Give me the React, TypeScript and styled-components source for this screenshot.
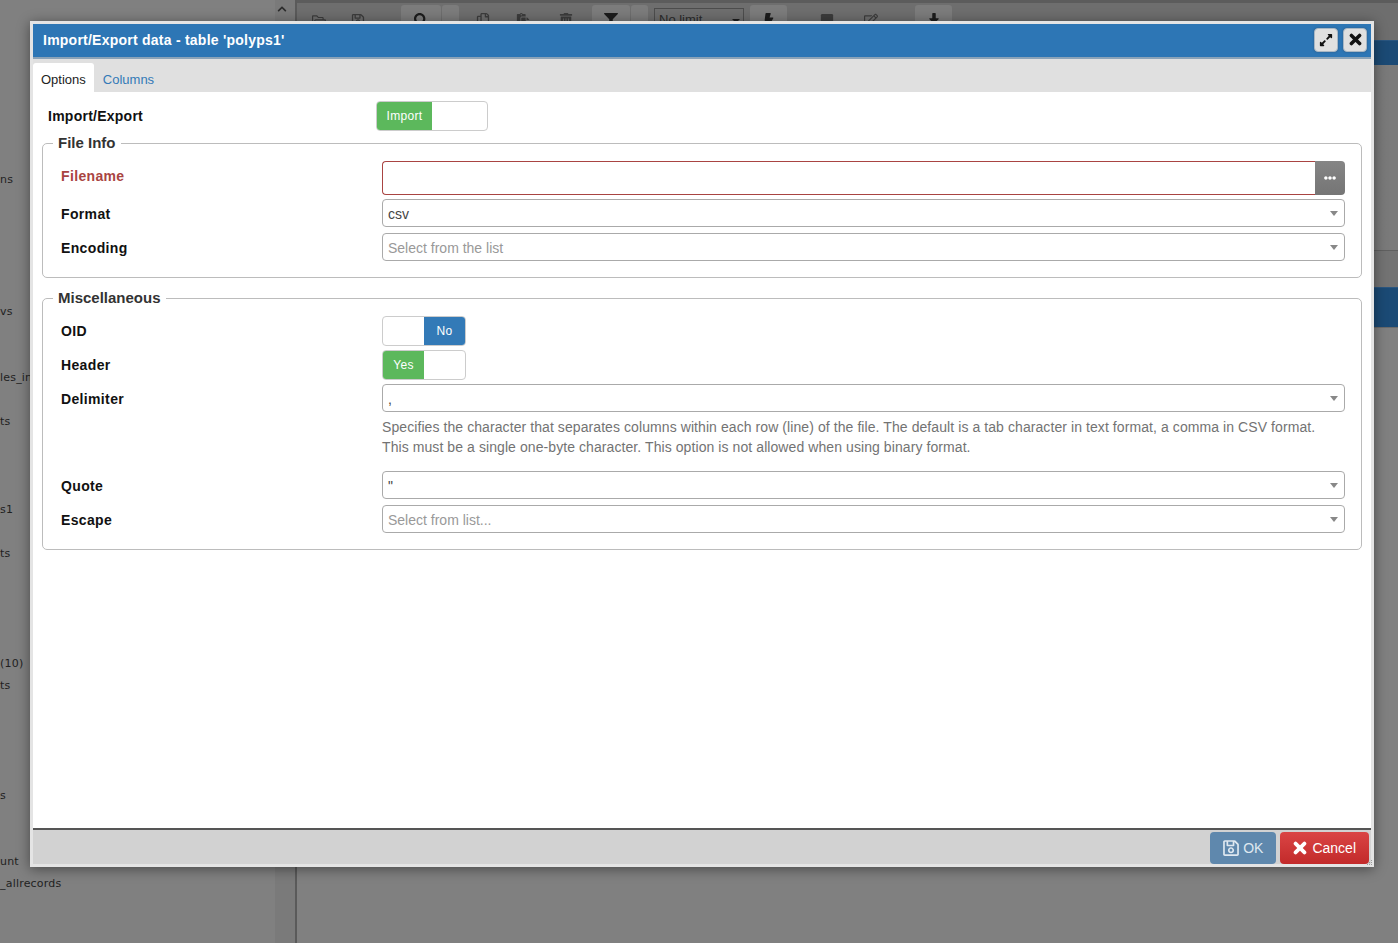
import React from "react";
import styled, { createGlobalStyle } from "styled-components";
import {
  FaRegFolderOpen, FaRegSave, FaSearch, FaRegCopy, FaPaste, FaTrashAlt, FaFilter,
  FaBolt, FaStop, FaRegEdit, FaDownload, FaExpandAlt, FaEllipsisH, FaChevronUp,
} from "react-icons/fa";

const Global = createGlobalStyle`
  html, body { margin: 0; padding: 0; height: 100%; overflow: hidden; background: #808080; }
  body { font-family: "Liberation Sans", Arial, sans-serif; font-size: 14px; color: #333; }
  * { box-sizing: border-box; }
`;

const Page = styled.div`
  position: relative;
  display: flex;
  width: 1398px;
  height: 943px;
  overflow: hidden;
  background: #808080;
`;

const Sidebar = styled.div`
  width: 275px;
  padding-top: 169px;
  font-family: "DejaVu Sans", Verdana, sans-serif;
  font-size: 11px;
  letter-spacing: 0.2px;
  color: #1f1f1f;
`;
const TreeRow = styled.div<{ $skip: number }>`
  height: 22px;
  margin-top: ${(p) => p.$skip * 22}px;
  line-height: 22px;
  white-space: nowrap;
`;
const SideScroll = styled.div`
  width: 20px;
  background: #7a7a7a;
  color: #2c2c2c;
  font-size: 10px;
  padding: 4px 0 0 2px;
`;
const Divider = styled.div`
  width: 2px;
  background: #5a5a5a;
`;
const Main = styled.div`
  flex: 1;
  display: flex;
  flex-direction: column;
`;
const Toolbar = styled.div`
  height: 40px;
  display: flex;
  align-items: flex-start;
  padding: 2px 0 0 3px;
  border-top: 3px solid #5c5c5c;
  background: #6e6e6e;
  color: #333;
`;
const ToolButton = styled.div<{ $w: number; $gap?: number; $raised?: boolean }>`
  width: ${(p) => p.$w}px;
  margin-left: ${(p) => p.$gap ?? 0}px;
  height: 30px;
  display: flex;
  justify-content: center;
  padding-top: 8px;
  font-size: 14px;
  color: ${(p) => (p.$raised ? "#1c1c1c" : "#3c3c3c")};
  background: ${(p) => (p.$raised ? "#7c7c7c" : "transparent")};
  border-radius: 3px;
`;
const LimitSelect = styled.div`
  width: 90px;
  height: 22px;
  display: flex;
  justify-content: space-between;
  margin: 3px 0 0 6px;
  padding: 3px 3px 0 4px;
  border: 1px solid #4d4d4d;
  font-size: 13px;
  color: #2a2a2a;
  white-space: nowrap;
`;
const LimitCaret = styled.span`
  width: 0;
  height: 0;
  margin-top: 7px;
  border-left: 4px solid transparent;
  border-right: 4px solid transparent;
  border-top: 4px solid #1c1c1c;
`;
const BlueBar = styled.div`
  background: #1b4a75;
  border-top: 1px solid #2a5680;
`;
const TopBlue = styled(BlueBar)`
  height: 25px;
`;
const Editor = styled.div`
  height: 186px;
  background: linear-gradient(90deg, #737373, #7a7a7a);
  border-bottom: 1px solid #606060;
`;
const Strip = styled.div`
  height: 36px;
  background: #737373;
`;
const LowerBlue = styled(BlueBar)`
  height: 41px;
  border-bottom: 1px solid #6a6a6a;
`;

const Dialog = styled.div`
  position: absolute;
  left: 30px;
  top: 21px;
  width: 1344px;
  height: 846px;
  display: flex;
  flex-direction: column;
  border: 3px solid #e4e4e4;
  background: #fff;
  box-shadow: 0 2px 12px rgba(0, 0, 0, 0.45);
`;
const TitleBar = styled.div`
  flex: none;
  height: 35px;
  display: flex;
  align-items: center;
  padding: 0 4px 2px 10px;
  background: #2d76b5;
  border-bottom: 2px solid #8ba3b8;
`;
const Title = styled.div`
  flex: 1;
  color: #fff;
  font-size: 14px;
  font-weight: 700;
  letter-spacing: 0.24px;
`;
const HeadButton = styled.div`
  width: 24px;
  height: 24px;
  margin-left: 5px;
  display: flex;
  align-items: center;
  justify-content: center;
  color: #111;
  font-size: 14px;
  background: #e0e0e0;
  border: 1px solid #a9b7c4;
  border-radius: 4px;
  box-shadow: 0 0 2px rgba(40, 60, 80, 0.5);
`;
const TabBar = styled.div`
  flex: none;
  height: 33px;
  display: flex;
  align-items: flex-end;
  background: #e0e0e0;
`;
const Tab = styled.div<{ $active?: boolean }>`
  height: 29px;
  padding: 0 8px;
  line-height: 33px;
  font-size: 13px;
  border-radius: 3px 3px 0 0;
  color: ${(p) => (p.$active ? "#222" : "#337ab7")};
  background: ${(p) => (p.$active ? "#fff" : "transparent")};
  margin-left: ${(p) => (p.$active ? 0 : 1)}px;
`;
const Body = styled.div`
  flex: 1;
  padding: 9px 9px 0;
`;
const TopRow = styled.div`
  display: flex;
  align-items: center;
  height: 30px;
  margin-bottom: 2px;
  padding-left: 6px;
`;
const TopLabel = styled.div`
  width: 328px;
  font-weight: 700;
  font-size: 14px;
  letter-spacing: 0.25px;
  color: #111;
`;
const Group = styled.fieldset<{ $top?: number }>`
  margin: ${(p) => p.$top ?? 0}px 0 0;
  padding: 8px 16px 16px 18px;
  border: 1px solid #bcbcbc;
  border-radius: 5px;
  min-width: 0;
`;
const Legend = styled.legend`
  margin-left: -8px;
  padding: 0 5px;
  height: 20px;
  line-height: 20px;
  font-size: 15px;
  font-weight: 700;
  color: #333;
`;
const Row = styled.div<{ $gap?: number }>`
  display: grid;
  grid-template-columns: 321px 1fr;
  margin-top: ${(p) => p.$gap ?? 6}px;
`;
const Label = styled.div<{ $error?: boolean }>`
  height: 28px;
  padding-top: 1px;
  font-size: 14px;
  font-weight: 700;
  line-height: 28px;
  letter-spacing: 0.35px;
  color: ${(p) => (p.$error ? "#a94442" : "#111")};
`;
const FileInput = styled.div`
  height: 34px;
  display: flex;
`;
const FileField = styled.div`
  flex: 1;
  border: 1px solid #a94442;
  border-right: 0;
  border-radius: 4px 0 0 4px;
`;
const FileButton = styled.div`
  width: 30px;
  display: flex;
  align-items: center;
  justify-content: center;
  padding-right: 1px;
  color: #fff;
  font-size: 12px;
  background: linear-gradient(#858585, #757575);
  border-radius: 0 4px 4px 0;
`;
const Select = styled.div<{ $placeholder?: boolean }>`
  height: 28px;
  display: flex;
  align-items: center;
  justify-content: space-between;
  padding: 2px 6px 0 5px;
  border: 1px solid #aaa;
  border-radius: 4px;
  font-size: 14px;
  color: ${(p) => (p.$placeholder ? "#999" : "#444")};
`;
const Caret = styled.span`
  width: 0;
  height: 0;
  margin-top: -2px;
  border-left: 4.5px solid transparent;
  border-right: 4.5px solid transparent;
  border-top: 5px solid #888;
`;
const Help = styled.div`
  margin: 5px 0 10px;
  font-size: 14px;
  line-height: 20px;
  letter-spacing: 0.08px;
  color: #737373;
`;
const Toggle = styled.div<{ $w: number }>`
  width: ${(p) => p.$w}px;
  height: 30px;
  display: flex;
  border: 1px solid #ccc;
  border-radius: 4px;
  overflow: hidden;
  background: #fff;
`;
const Handle = styled.div<{ $tone: "green" | "blue"; $w: number; $right?: boolean }>`
  width: ${(p) => p.$w}px;
  margin-left: ${(p) => (p.$right ? "auto" : "0")};
  display: flex;
  align-items: center;
  justify-content: center;
  font-size: 12px;
  letter-spacing: 0.3px;
  color: #fff;
  background: ${(p) => (p.$tone === "green" ? "#5cb85c" : "#337ab7")};
`;
const Footer = styled.div`
  flex: none;
  height: 36px;
  display: flex;
  justify-content: flex-end;
  gap: 4px;
  padding: 2px 2px 0 0;
  background: #d2d2d2;
  border-top: 2px solid #555;
`;
const ActionButton = styled.div<{ $kind: "ok" | "cancel" }>`
  height: 32px;
  display: flex;
  align-items: center;
  gap: ${(p) => (p.$kind === "ok" ? 3 : 5)}px;
  padding: 0 13px 0 ${(p) => (p.$kind === "ok" ? 12 : 13)}px;
  font-size: 14px;
  border-radius: 4px;
  color: ${(p) => (p.$kind === "ok" ? "#dfe8f0" : "#fff")};
  background: ${(p) => (p.$kind === "ok" ? "#5f88ad" : "linear-gradient(#da4545, #c22a2a)")};
`;
const Grip = styled.svg`
  position: absolute;
  right: -2px;
  bottom: -2px;
`;

// FontAwesome 4 style chunky cross
const Cross = ({ size }: { size: number }) => (
  <svg width={size} height={size} viewBox="0 0 14 14">
    <path d="M2.6 2.6 11.4 11.4M11.4 2.6 2.6 11.4" stroke="currentColor" strokeWidth="3.8" strokeLinecap="round" fill="none" />
  </svg>
);

const rows: [number, string][] = [
  [0, "ns"], [5, "vs"], [2, "les_in"], [1, "ts"], [3, "s1"], [1, "ts"], [4, "(10)"], [0, "ts"],
  [4, "s"], [2, "unt"], [0, "_allrecords"],
];

export default function App() {
  return (
    <Page>
      <Global />
      <Sidebar>
        {rows.map(([skip, text], i) => (
          <TreeRow key={i} $skip={skip}>{text}</TreeRow>
        ))}
      </Sidebar>
      <SideScroll><FaChevronUp /></SideScroll>
      <Divider />
      <Main>
        <Toolbar>
          <ToolButton $w={38}><FaRegFolderOpen /></ToolButton>
          <ToolButton $w={40}><FaRegSave /></ToolButton>
          <ToolButton $w={40} $gap={23} $raised><FaSearch /></ToolButton>
          <ToolButton $w={17} $gap={1} $raised />
          <ToolButton $w={40} $gap={4}><FaRegCopy /></ToolButton>
          <ToolButton $w={39}><FaPaste /></ToolButton>
          <ToolButton $w={40} $gap={4}><FaTrashAlt /></ToolButton>
          <ToolButton $w={38} $gap={6} $raised><FaFilter /></ToolButton>
          <ToolButton $w={17} $gap={1} $raised />
          <LimitSelect>No limit<LimitCaret /></LimitSelect>
          <ToolButton $w={37} $gap={6} $raised><FaBolt /></ToolButton>
          <ToolButton $w={40} $gap={20}><FaStop /></ToolButton>
          <ToolButton $w={40} $gap={4}><FaRegEdit /></ToolButton>
          <ToolButton $w={37} $gap={24} $raised><FaDownload /></ToolButton>
        </Toolbar>
        <TopBlue />
        <Editor />
        <Strip />
        <LowerBlue />
      </Main>

      <Dialog>
        <TitleBar>
          <Title>Import/Export data - table 'polyps1'</Title>
          <HeadButton><FaExpandAlt /></HeadButton>
          <HeadButton><Cross size={13} /></HeadButton>
        </TitleBar>
        <TabBar>
          <Tab $active>Options</Tab>
          <Tab>Columns</Tab>
        </TabBar>
        <Body>
          <TopRow>
            <TopLabel>Import/Export</TopLabel>
            <Toggle $w={112}><Handle $tone="green" $w={55}>Import</Handle></Toggle>
          </TopRow>
          <Group>
            <Legend>File Info</Legend>
            <Row $gap={0}>
              <Label $error>Filename</Label>
              <FileInput>
                <FileField />
                <FileButton><FaEllipsisH /></FileButton>
              </FileInput>
            </Row>
            <Row $gap={4}>
              <Label>Format</Label>
              <Select>csv<Caret /></Select>
            </Row>
            <Row>
              <Label>Encoding</Label>
              <Select $placeholder>Select from the list<Caret /></Select>
            </Row>
          </Group>
          <Group $top={10}>
            <Legend>Miscellaneous</Legend>
            <Row $gap={0}>
              <Label>OID</Label>
              <Toggle $w={84}><Handle $tone="blue" $w={41} $right>No</Handle></Toggle>
            </Row>
            <Row $gap={4}>
              <Label>Header</Label>
              <Toggle $w={84}><Handle $tone="green" $w={41}>Yes</Handle></Toggle>
            </Row>
            <Row $gap={4}>
              <Label>Delimiter</Label>
              <div>
                <Select>,<Caret /></Select>
                <Help>
                  Specifies the character that separates columns within each row (line) of the file. The default is a tab character in text format, a comma in CSV format.
                  <br />
                  This must be a single one-byte character. This option is not allowed when using binary format.
                </Help>
              </div>
            </Row>
            <Row $gap={4}>
              <Label>Quote</Label>
              <Select>"<Caret /></Select>
            </Row>
            <Row>
              <Label>Escape</Label>
              <Select $placeholder>Select from list...<Caret /></Select>
            </Row>
          </Group>
        </Body>
        <Footer>
          <ActionButton $kind="ok"><FaRegSave size={18} />OK</ActionButton>
          <ActionButton $kind="cancel"><Cross size={14} />Cancel</ActionButton>
        </Footer>
        <Grip width="7" height="7" viewBox="0 0 7 7">
          <path d="M5 1h1v1H5zM3 3h1v1H3zM5 3h1v1H5zM1 5h1v1H1zM3 5h1v1H3zM5 5h1v1H5z" fill="#9a9a9a" />
        </Grip>
      </Dialog>
    </Page>
  );
}
